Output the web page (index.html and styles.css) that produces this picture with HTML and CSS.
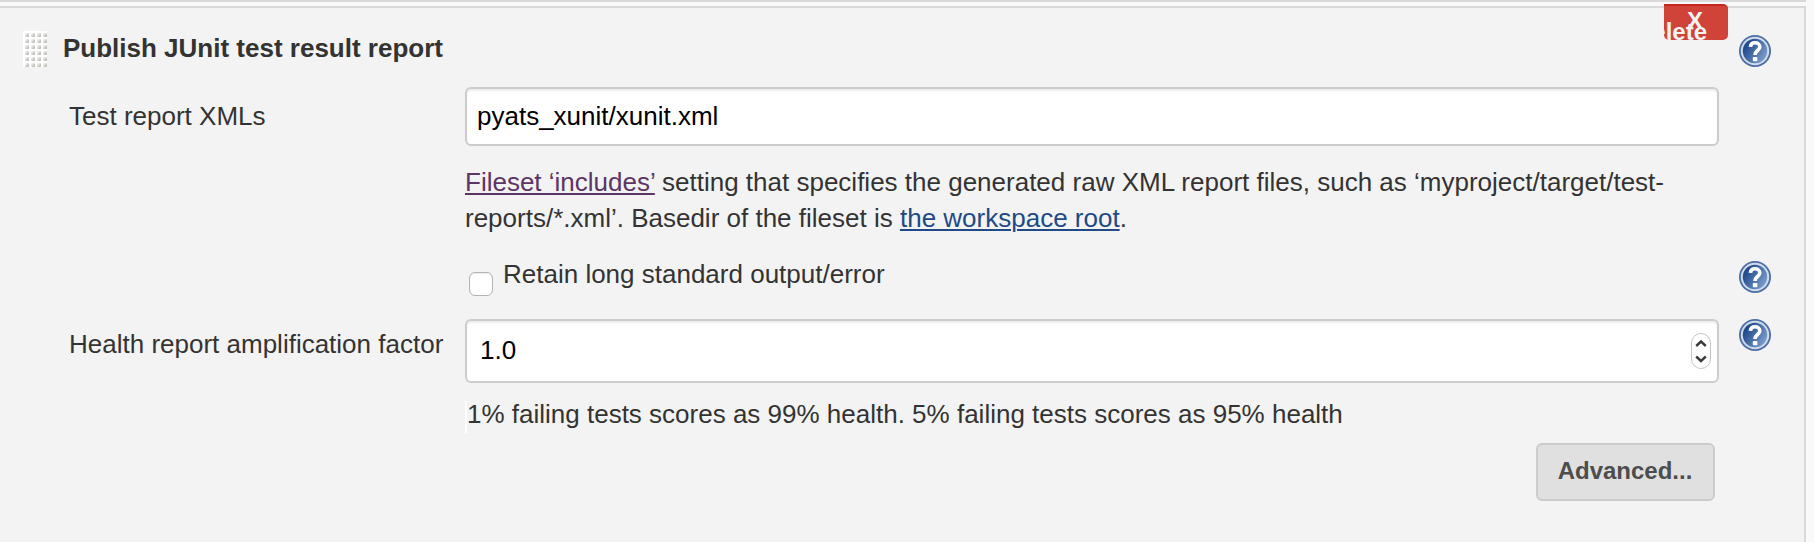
FILE: index.html
```html
<!DOCTYPE html>
<html lang="en">
<head>
<meta charset="utf-8">
<title>Publish JUnit test result report</title>
<link rel="stylesheet" href="styles.css">
</head>
<body>
<svg class="defs" width="0" height="0" aria-hidden="true">
  <defs>
    <linearGradient id="blue" x1="0" y1="0.2" x2="1" y2="0.8">
      <stop offset="0.15" stop-color="#204a8c"/>
      <stop offset="1" stop-color="#86a7d3"/>
    </linearGradient>
    <symbol id="help" viewBox="0 0 32 32">
      <circle cx="16" cy="16" r="16" fill="#4a6ea6"/>
      <circle cx="16" cy="16" r="13.2" fill="url(#blue)" stroke="#d0daea" stroke-width="2"/>
      <path d="M11.400 11.800C11.600 9 13.500 7.800 16 7.800s4.800 1.300 4.800 4.200c0 3.600-4.800 3.500-4.800 8" fill="none" stroke="#fff" stroke-width="3.600"/>
      <rect x="13.800" y="22" width="4.600" height="4.200" rx="0.800" fill="#fff"/>
    </symbol>
    <linearGradient id="dot" x1="0" y1="0" x2="1" y2="1">
      <stop offset="0.2" stop-color="#f0f0ee"/>
      <stop offset="1" stop-color="#a9a9a4"/>
    </linearGradient>
    <pattern id="grip" width="6" height="6" patternUnits="userSpaceOnUse">
      <rect width="6" height="6" fill="#fff"/>
      <rect x="2" y="2" width="4" height="4" rx="1" fill="url(#dot)"/>
    </pattern>
  </defs>
</svg>
<main class="section">
  <header class="row heading">
    <svg class="grip" width="24" height="36"><rect width="24" height="36" fill="url(#grip)"/></svg>
    <h1 class="title">Publish JUnit test result report</h1>
    <button class="delete" type="button"><span class="delete-x">X</span><span class="delete-label">Delete</span></button>
    <svg class="help"><use href="#help"/></svg>
  </header>
  <div class="row files">
    <label class="label" for="xmls">Test report XMLs</label>
    <input class="field text" id="xmls" type="text" value="pyats_xunit/xunit.xml">
  </div>
  <p class="description"><a class="visited" href="#">Fileset ‘includes’</a> setting that specifies the generated raw XML report files, such as ‘myproject/target/test-<br>reports/*.xml’. Basedir of the fileset is <a class="link" href="#">the workspace root</a>.</p>
  <div class="row retain">
    <label class="check"><input class="box" type="checkbox"><span>Retain long standard output/error</span></label>
    <svg class="help"><use href="#help"/></svg>
  </div>
  <div class="row health">
    <label class="label" for="factor">Health report amplification factor</label>
    <div class="field number">
      <input class="value" id="factor" type="text" value="1.0">
      <svg class="stepper" viewBox="0 0 20 36"><rect x="0.500" y="0.500" width="19" height="35" rx="9.500" fill="#fff" stroke="#c4c4c4"/><path d="M5.200 13l4.800-4.500 4.800 4.500M5.200 23.500l4.800 4.500 4.800-4.500" fill="none" stroke="#3c3c3c" stroke-width="2.400"/></svg>
    </div>
    <svg class="help"><use href="#help"/></svg>
  </div>
  <p class="score">1% failing tests scores as 99% health. 5% failing tests scores as 95% health</p>
  <div class="actions"><button class="advanced" type="button">Advanced...</button></div>
</main>
</body>
</html>
```
FILE: styles.css
```css
* { box-sizing: border-box; }

body {
  margin: 0;
  height: 542px;
  overflow: hidden;
  background: #f9f9f9;
  color: #333;
  font: 26px/36px "Liberation Sans", Arial, sans-serif;
}

body::before {
  content: "";
  display: block;
  width: 1806px;
  height: 2px;
  margin-bottom: 4px;
  background: #d9d9d9;
}

.defs { position: absolute; }

.section {
  width: 1806px;
  height: 536px;
  border: 2px solid #d9d9d9;
  border-width: 2px 2px 0 0;
  background: #f3f3f3;
}

.row { display: flex; align-items: flex-start; }

.heading { position: relative; height: 79px; padding-left: 23px; }
.grip { margin-top: 23px; }
.title { margin: 22px 0 0 16px; font-size: 26px; line-height: 36px; font-weight: bold; }

.help { flex: none; width: 32px; height: 32px; margin-left: 20px; }
.heading .help { margin: 27px 33px 0 auto; }

.delete {
  position: absolute;
  left: 1664px;
  top: -4px;
  width: 64px;
  height: 36px;
  padding: 0;
  overflow: hidden;
  border: 0;
  border-top: 2px solid #c4281d;
  border-radius: 0 5px 5px 5px;
  background: #d04339;
  color: #f3f3f3;
  font: bold 24px/24px "Liberation Sans", Arial, sans-serif;
}
.delete-x { position: absolute; left: 23px; top: 3px; }
.delete-label { position: absolute; right: 21px; top: 14px; }

.label { flex: none; width: 396px; }
.files, .health { padding-left: 69px; }
.files { height: 77px; }
.files .label { padding-top: 11px; }

.field {
  width: 1254px;
  border: 2px solid #ccc;
  border-radius: 6px;
  background: #fff;
  box-shadow: inset 0 2px 2px rgba(0, 0, 0, 0.075);
  color: #000;
  font: inherit;
}
.text { height: 59px; padding: 0 10px 1px; }

.description { margin: 0 0 0 465px; height: 92px; white-space: nowrap; }
.visited { color: #5c3566; }
.link { color: #204a87; }
a { text-decoration-thickness: 2px; text-underline-offset: 2px; }

.retain { height: 63px; padding-left: 469px; }
.check { display: flex; width: 1250px; }
.check span { margin-left: 10px; }
.box {
  appearance: none;
  width: 24px;
  height: 24px;
  margin: 16px 0 0;
  border: 1px solid #b3b3b3;
  border-radius: 6px;
  background: #fff;
  box-shadow: inset 0 1px 1px rgba(0, 0, 0, 0.08);
}
.retain .help { margin-top: 5px; }

.health { height: 64px; }
.health .label { padding-top: 7px; }
.number { display: flex; align-items: center; height: 64px; padding: 0 6px 0 13px; }
.value { flex: 1; height: 60px; padding: 0 0 2px; border: 0; outline: 0; background: none; color: #000; font: inherit; }
.stepper { width: 20px; height: 36px; }

.score {
  width: max-content;
  height: 32px;
  margin: 18px 0 0 465px;
  border-left: 2px solid #fff;
  line-height: 26px;
}

.actions { display: flex; justify-content: flex-end; padding: 10px 89px 0 0; }
.advanced {
  width: 179px;
  height: 58px;
  padding: 0 1px 2px 0;
  border: 2px solid #ccc;
  border-radius: 6px;
  background: #e0e0e0;
  color: #4d4d4d;
  font: bold 24px/36px "Liberation Sans", Arial, sans-serif;
}
```
